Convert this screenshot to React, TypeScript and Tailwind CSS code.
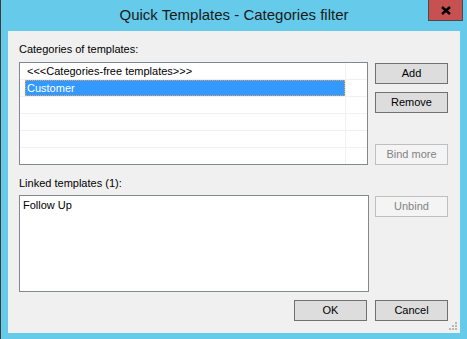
import React from 'react';

const font = { fontFamily: '"Segoe UI", "Liberation Sans", Arial, sans-serif' };

function Btn({ label, disabled, className = '' }: { label: string; disabled?: boolean; className?: string }) {
  return (
    <button
      className={
        'w-[73px] h-[21px] flex items-center justify-center border text-[11px] leading-none ' +
        (disabled
          ? 'bg-[#f4f4f4] border-[#bfbfbf] text-[#838383]'
          : 'bg-[#dddddd] border-[#707070] text-black') +
        ' ' +
        className
      }
    >
      {label}
    </button>
  );
}

export default function App() {
  const rows = ['<<<Categories-free templates>>>', 'Customer', '', '', '', ''];

  return (
    <div
      className="relative w-[467px] h-[339px] bg-[#66cbea] border-l border-[#3c3c3c] flex flex-col select-none"
      style={font}
    >
      {/* Title bar */}
      <div className="h-[31px] flex items-center justify-center text-[15px] text-[#1a1a1a] pb-[1px]">
        Quick Templates - Categories filter
      </div>
      <div className="absolute top-0 left-[427px] w-[35px] h-[21px] bg-[#c75050] border border-t-0 border-[#4a4a4a] flex items-center justify-center">
        <svg width="10" height="9" viewBox="0 0 10 9">
          <path d="M1 1 L9 8 M9 1 L1 8" stroke="#000" strokeWidth="2.4" />
        </svg>
      </div>

      {/* Content */}
      <div className="relative ml-[7px] w-[452px] h-[302px] bg-[#f0f0f0] pl-[11px] pr-[12px] pt-[10px] text-[11px] text-black flex flex-col">
        <div className="h-[16px] leading-[16px]">Categories of templates:</div>

        <div className="mt-[5px] flex gap-[7px]">
          <div className="w-[349px] h-[103px] bg-white border border-[#828790] overflow-hidden">
            {rows.map((r, i) => (
              <div key={i} className="flex h-[17px] border-b border-[#f0f0f0]">
                <div className="w-[326px] h-full border-r border-[#f0f0f0] pl-[5px]">
                  {i === 1 ? (
                    <div className="h-full bg-[#3399ff] text-white pl-[2px] leading-[16px] border border-dotted border-[#e9a25c]">
                      <span className="-ml-[1px] -mt-[1px] block">{r}</span>
                    </div>
                  ) : (
                    <div className="h-full pl-[2px] leading-[16px]">{r}</div>
                  )}
                </div>
                <div className="flex-1" />
              </div>
            ))}
          </div>
          <div className="flex flex-col h-[103px]">
            <Btn label="Add" className="mt-[1px]" />
            <Btn label="Remove" className="mt-[8px]" />
            <Btn label="Bind more" disabled className="mt-auto" />
          </div>
        </div>

        <div className="mt-[10px] h-[16px] leading-[16px]">Linked templates (1):</div>

        <div className="mt-[4px] flex gap-[6px]">
          <div className="w-[350px] h-[97px] bg-white border border-[#828790] px-[3px] pt-[1px] leading-[16px]">
            Follow Up
          </div>
          <Btn label="Unbind" disabled className="mt-[1px]" />
        </div>

        <div className="mt-[8px] flex justify-end gap-[8px]">
          <Btn label="OK" />
          <Btn label="Cancel" />
        </div>

        <svg className="absolute right-[3px] bottom-[3px]" width="8" height="8" viewBox="0 0 8 8">
          {[
            [6, 0],
            [3, 3],
            [6, 3],
            [0, 6],
            [3, 6],
            [6, 6],
          ].map(([x, y], i) => (
            <rect key={i} x={x} y={y} width="2" height="2" fill="#b8b8b8" />
          ))}
        </svg>
      </div>
    </div>
  );
}
